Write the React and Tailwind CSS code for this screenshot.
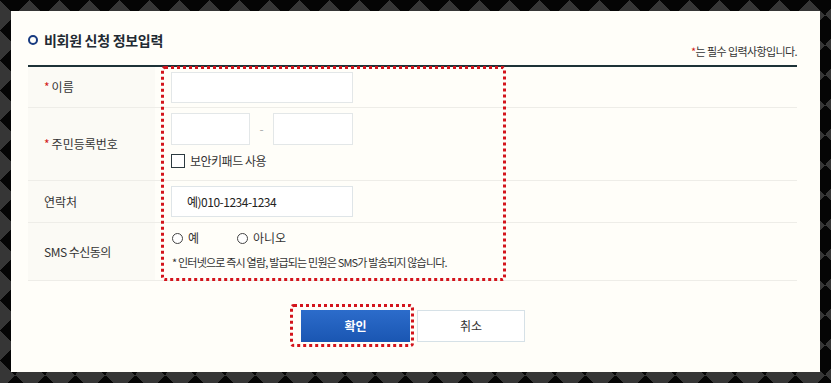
export default function App() {
  const font = { fontFamily: '"Noto Sans CJK KR", "Noto Sans", sans-serif' }
  return (
    <div
      style={font}
      className="w-[831px] h-[383px] pt-[11px] pl-[11px] bg-[repeating-conic-gradient(from_45deg,#363636_0_25%,#050505_0_50%)] bg-[length:30px_30px]"
    >
      <div className="w-[809px] h-[361px] bg-[#fffef9] pl-[17px] pr-[23px]">
        {/* header */}
        <div className="flex justify-between items-end h-[54px] pb-[7px]">
          <div className="flex items-center gap-[6px] mb-[9px]">
            <span className="w-[10px] h-[10px] rounded-full border-2 border-[#173a80]" />
            <h2 className="text-[14px] leading-[18px] font-bold text-[#222a33] tracking-[-0.3px]">비회원 신청 정보입력</h2>
          </div>
          <p className="text-[11px] leading-[14px] text-[#333] tracking-[-0.6px]">
            <span className="text-[#d21a1a]">*</span>는 필수 입력사항입니다.
          </p>
        </div>

        {/* form table */}
        <div className="relative border-t-2 border-[#1d3237]">
          <div className="grid grid-cols-[127px_1fr] text-[12px] text-[#333]">
            <div className="bg-[#fbfaf5] border-b border-[#eeede8] h-[41px] flex items-center pl-[16px]">
              <span className="text-[#d21a1a] mr-[2px]">*</span>이름
            </div>
            <div className="border-b border-[#eeede8] h-[41px] flex items-center pl-[16px]">
              <div className="w-[182px] h-[31px] border border-[#e3e7e8] bg-white" />
            </div>

            <div className="bg-[#fbfaf5] border-b border-[#eeede8] h-[73px] flex items-center pl-[16px]">
              <span className="text-[#d21a1a] mr-[2px]">*</span>주민등록번호
            </div>
            <div className="border-b border-[#eeede8] h-[73px] pl-[16px] pt-[5px]">
              <div className="flex items-center">
                <div className="w-[79px] h-[32px] border border-[#e3e7e8] bg-white" />
                <span className="w-[23px] text-center text-[#aaa]">-</span>
                <div className="w-[80px] h-[32px] border border-[#e3e7e8] bg-white" />
              </div>
              <label className="flex items-center gap-[5px] mt-[9px] leading-[14px] tracking-[-0.5px]">
                <span className="w-[14px] h-[14px] border border-[#2c3a40] bg-white" />
                보안키패드 사용
              </label>
            </div>

            <div className="bg-[#fbfaf5] border-b border-[#eeede8] h-[42px] flex items-center pl-[16px]">연락처</div>
            <div className="border-b border-[#eeede8] h-[42px] flex items-center pl-[16px]">
              <div className="w-[182px] h-[31px] border border-[#dfe5e8] bg-white flex items-center pl-[15px] text-[#222] tracking-[-0.5px]">
                예)010-1234-1234
              </div>
            </div>

            <div className="bg-[#fbfaf5] border-b border-[#eeede8] h-[58px] flex items-center pl-[16px] tracking-[-0.5px]">SMS 수신동의</div>
            <div className="border-b border-[#eeede8] h-[58px] pl-[17px] pt-[8px]">
              <div className="flex items-center leading-[14px]">
                <span className="w-[11px] h-[11px] rounded-full border border-[#444] bg-white" />
                <span className="ml-[5px] w-[49px]">예</span>
                <span className="w-[11px] h-[11px] rounded-full border border-[#444] bg-white" />
                <span className="ml-[5px]">아니오</span>
              </div>
              <p className="mt-[10px] text-[11px] leading-[14px] tracking-[-0.8px] text-[#333]">
                * 인터넷으로 즉시 열람, 발급되는 민원은 SMS가 발송되지 않습니다.
              </p>
            </div>
          </div>

          {/* annotation box */}
          <div className="absolute left-[133px] top-[-1px] w-[345px] h-[215px] rounded-[4px] border-[3px] border-dotted border-[#d3141c] pointer-events-none" />
        </div>

        {/* buttons */}
        <div className="flex justify-center gap-[7px] mt-[29px] pl-[1px]">
          <div className="relative">
            <button className="w-[109px] h-[32px] bg-gradient-to-b from-[#2c6ccb] to-[#1a56b2] text-white text-[12px] font-bold">확인</button>
            <div className="absolute left-[-11px] top-[-6px] w-[124px] h-[43px] rounded-[4px] border-[3px] border-dotted border-[#d3141c]" />
          </div>
          <button className="w-[108px] h-[32px] bg-white border border-[#d6e1e7] text-[#333] text-[12px]">취소</button>
        </div>
      </div>
    </div>
  )
}
